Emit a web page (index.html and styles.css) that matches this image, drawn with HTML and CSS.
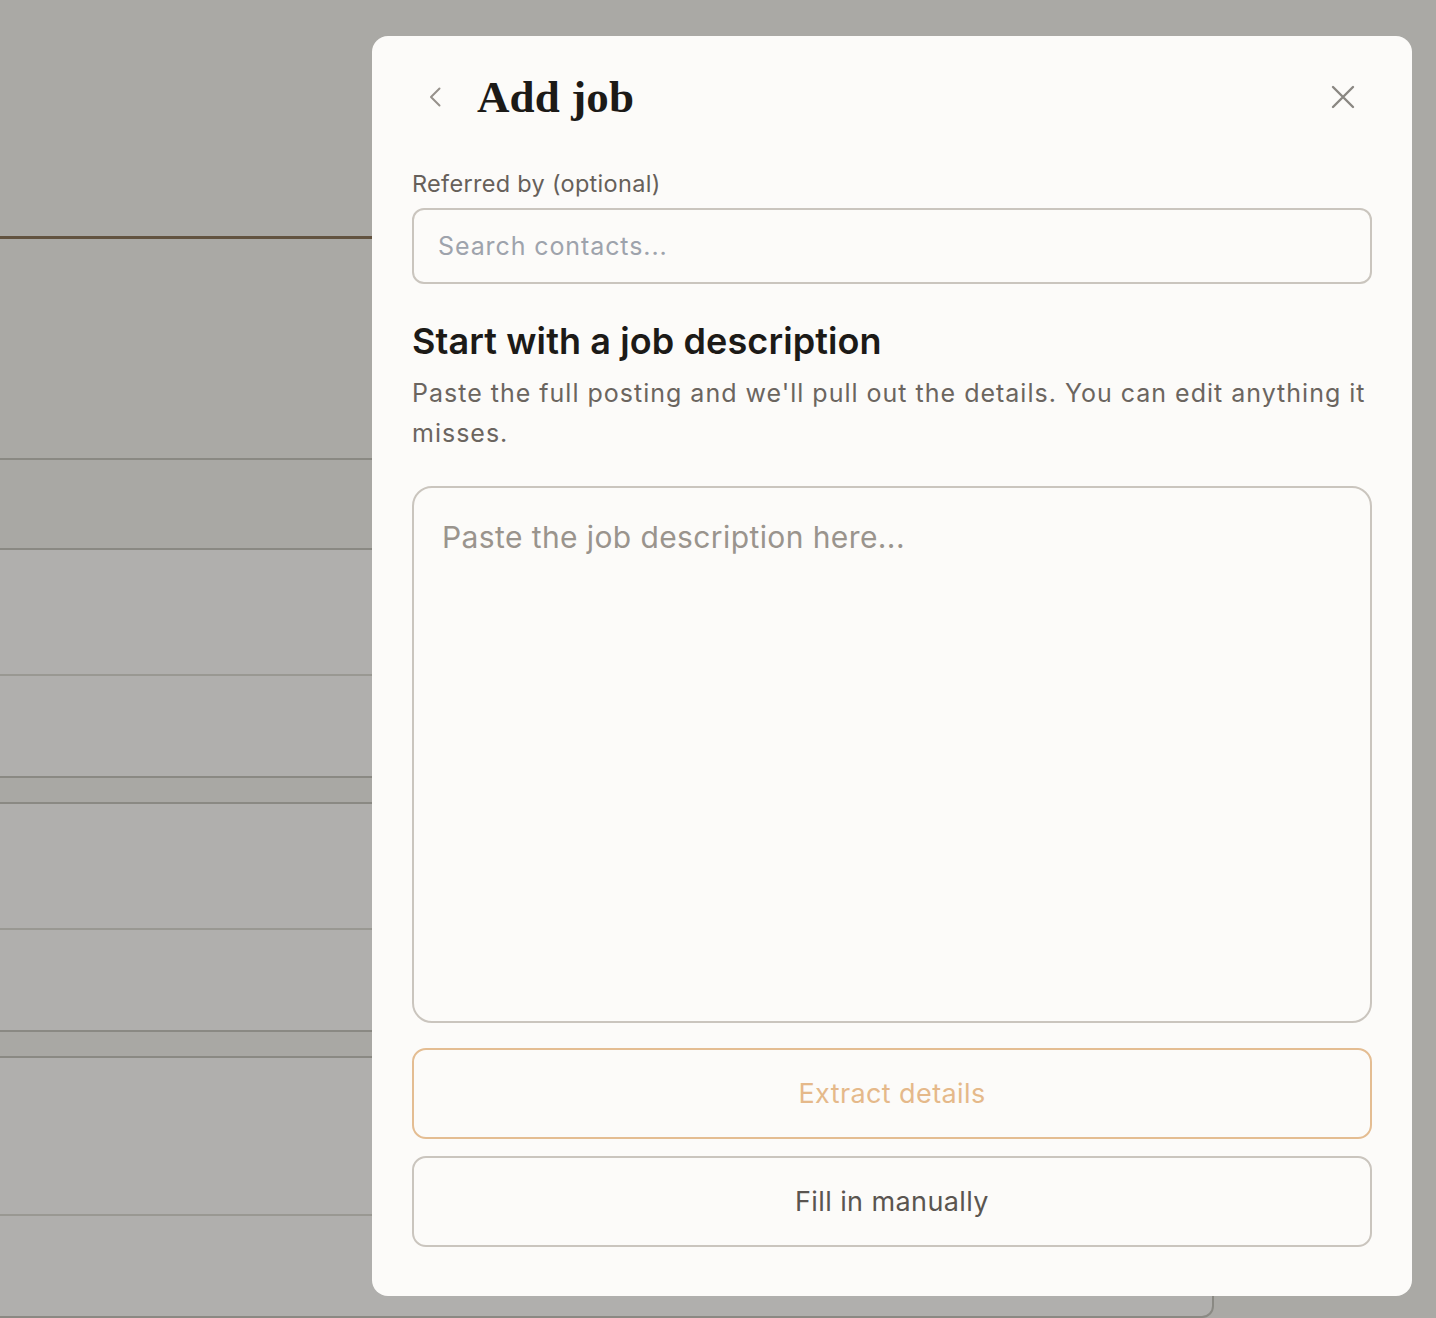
FILE: index.html
```html
<!DOCTYPE html>
<html lang="en">
<head>
  <meta charset="UTF-8">
  <meta name="viewport" content="width=device-width, initial-scale=1.0">
  <title>Add job</title>
  <link rel="stylesheet" href="styles.css">
</head>
<body>
  <!-- page behind the dialog (dimmed) -->
  <div class="page">
    <div class="top-area"></div>
    <div class="accent-line"></div>
    <div class="spacer"></div>
    <div class="table-card">
      <div class="t-head"></div>
      <div class="t-row thin" style="height:124px"></div>
      <div class="t-row" style="height:100px"></div>
      <div class="t-group"></div>
      <div class="t-row thin" style="height:124px"></div>
      <div class="t-row" style="height:100px"></div>
      <div class="t-group"></div>
      <div class="t-row thin" style="height:156px"></div>
      <div class="t-row last" style="height:100px"></div>
    </div>
  </div>

  <div class="overlay">
    <div class="modal">
      <div class="modal-header">
        <button class="icon-btn back-btn" aria-label="Back">
          <svg width="24" height="24" viewBox="0 0 24 24" fill="none" stroke="currentColor" stroke-width="2" stroke-linecap="round" stroke-linejoin="round"><path d="M15.5 3.5 L7 12 L15.5 20.5"/></svg>
        </button>
        <h2 class="modal-title">Add job</h2>
        <button class="icon-btn close-btn" aria-label="Close">
          <svg width="24" height="24" viewBox="0 0 24 24" fill="none" stroke="currentColor" stroke-width="2.4" stroke-linecap="round"><path d="M2 2 L22 22 M22 2 L2 22"/></svg>
        </button>
      </div>

      <label class="field-label" for="referrer">Referred by (optional)</label>
      <input type="text" id="referrer" class="text-input" placeholder="Search contacts..." autocomplete="off">

      <h3 class="section-title">Start with a job description</h3>
      <p class="section-text">Paste the full posting and we'll pull out the details. You can edit anything it misses.</p>

      <textarea class="jd-input" placeholder="Paste the job description here..."></textarea>

      <button class="btn btn-extract">Extract details</button>
      <button class="btn btn-manual">Fill in manually</button>
    </div>
  </div>
</body>
</html>
```

FILE: styles.css
```css
body {
  margin: 0;
  background: #aaa9a5;
  font-family: 'Inter', 'Noto Sans', sans-serif;
  height: 1318px;
  overflow: hidden;
}

/* dimmed page behind */
.page { width: 1436px; }
.top-area { height: 236px; }
.accent-line { height: 3px; background: #625340; width: 372px; }
.spacer { height: 219px; }
.table-card {
  margin-left: -20px;
  width: 1232px;
  border-top: 2px solid #8a8983;
  border-bottom: 2px solid #8a8983;
  border-right: 2px solid #8a8983;
  border-bottom-right-radius: 12px;
  overflow: hidden;
  background: #b0afad;
}
.t-head { height: 88px; background: #a9a8a4; border-bottom: 2px solid #8a8983; }
.t-group { height: 24px; background: #a9a8a4; border-bottom: 2px solid #8a8983; }
.t-row { border-bottom: 2px solid #8a8983; }
.t-row.thin { border-bottom: 2px solid #999892; }
.t-row.last { border-bottom: none; }

/* dialog */
.overlay {
  position: fixed;
  inset: 0;
}
.modal {
  position: absolute;
  left: 372px; top: 36px;
  width: 1040px; height: 1260px;
  box-sizing: border-box;
  padding: 30px 40px 48px;
  background: #fcfbf9;
  border-radius: 16px;
  display: flex;
  flex-direction: column;
}
.modal-header {
  display: flex;
  align-items: center;
  height: 62px;
}
.icon-btn {
  border: none; background: none; padding: 0; cursor: pointer;
  display: flex; align-items: center; justify-content: center;
}
.back-btn { color: #96918b; width: 48px; height: 48px; margin-right: 17px; }
.close-btn { color: #8a8782; margin-left: auto; width: 48px; height: 48px; margin-right: 5px; }
.modal-title {
  margin: 0;
  font-family: 'Liberation Serif', serif;
  font-size: 45px;
  font-weight: 700;
  color: #1c1a17;
  letter-spacing: 0.1px;
}

.field-label {
  margin-top: 44px;
  font-size: 23.5px;
  font-weight: 400;
  letter-spacing: 0.3px;
  line-height: 24px;
  color: #66605a;
}
.text-input {
  margin-top: 12px;
  height: 76px;
  box-sizing: border-box;
  border: 2px solid #cac5be;
  border-radius: 12px;
  background: #fcfbf9;
  padding: 0 24px;
  font-family: inherit;
  font-size: 25px;
  letter-spacing: 0.9px;
  outline: none;
}
.text-input::placeholder { color: #9ea3ac; }

.section-title {
  margin: 38px 0 0;
  font-size: 36px;
  line-height: 38px;
  font-weight: 600;
  letter-spacing: 0.1px;
  color: #1c1a17;
}
.section-text {
  margin: 13px 0 0;
  font-size: 25px;
  letter-spacing: 1px;
  line-height: 40px;
  color: #6b655f;
}
.jd-input {
  margin-top: 33px;
  height: 537px;
  box-sizing: border-box;
  border: 2px solid #cac5be;
  border-radius: 20px;
  background: #fcfbf9;
  padding: 31px 28px;
  font-family: inherit;
  font-size: 30px;
  letter-spacing: 0.4px;
  resize: none;
  outline: none;
}
.jd-input::placeholder { color: #9a948d; }

.btn {
  height: 91px;
  box-sizing: border-box;
  border-radius: 14px;
  background: #fcfbf9;
  font-family: inherit;
  font-size: 27px;
  letter-spacing: 0.4px;
  cursor: pointer;
}
.btn-extract {
  margin-top: 25px;
  border: 2px solid #e4bd92;
  color: #e5b98a;
}
.btn-manual {
  margin-top: 17px;
  border: 2px solid #cac5be;
  color: #5a5550;
}
```
